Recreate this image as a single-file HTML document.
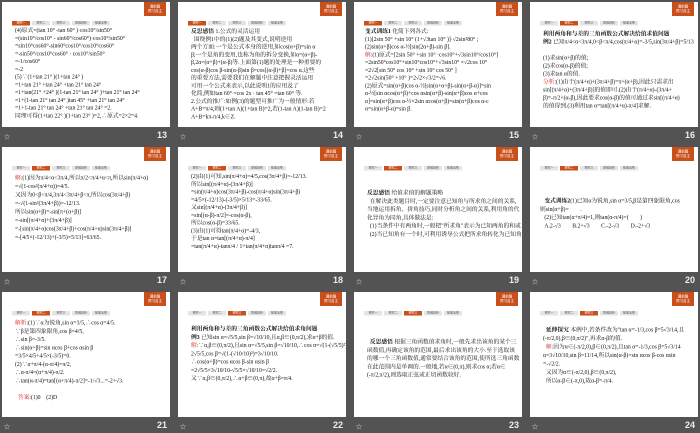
<!DOCTYPE html>
<html><head><meta charset="utf-8"><style>
*{margin:0;padding:0;box-sizing:border-box}
body{width:700px;height:431px;background:#535353;position:relative;overflow:hidden;font-family:"Liberation Serif","Noto Serif CJK SC",serif}
.s{position:absolute;width:168px;height:125px;background:#fff;overflow:hidden}
.in{position:absolute;left:0;top:0;width:336px;height:250px;transform:scale(.5);transform-origin:0 0}
.ob{position:absolute;right:8px;top:0;width:44px;height:28px;background:#c9501c;color:#fff;font-size:7px;line-height:9px;text-align:center;padding-top:5px;font-family:"Liberation Sans","Noto Sans CJK SC",sans-serif}
.tb{position:absolute;left:20px;top:38px;height:9px;display:flex;gap:4px}
.tb span{width:36px;height:9px;background:#e4e4e4;font-size:6px;line-height:9px;text-align:center;color:#555;font-family:"Liberation Sans","Noto Sans CJK SC",sans-serif}
.tb span.a{background:#c9501c;color:#fff}
.tx{position:absolute;left:26px;top:54px;right:14px;font-size:11.5px;line-height:17px;color:#111;white-space:nowrap}
.tx b{font-weight:bold}
.r{color:#d22}
.lab{position:absolute;width:168px;height:14px;color:#ddd;font-size:9px}
.lab i{position:absolute;left:2px;top:3px;font-style:normal;font-size:6px}
.lab b{position:absolute;right:3px;top:1px;font-family:"Liberation Sans",sans-serif;font-size:9px;color:#eee}
</style></head><body>

<div class="s" style="left:2px;top:2px"><div class="in"><div class="ob">课前篇<br>预习自主</div><div class="tb"><span class="a">探究一</span><span>探究二</span><span>探究三</span><span>思维辨析</span><span>随堂演练</span></div>
<div class="tx" style="top:50px;line-height:15.5px">(4)原式=(tan 10° -tan 60° )·cos10°/sin50°<br>=(sin10°/cos10° - sin60°/cos60°)·cos10°/sin50°<br>=sin10°cos60°-sin60°cos10°/cos10°cos60°<br>=-sin50°/cos10°cos60° · cos10°/sin50°<br>=-1/cos60°<br>=-2<br>(5)∵(1+tan 21° )(1+tan 24° )<br>=1+tan 21° +tan 24° +tan 21° tan 24°<br>=1+tan(21° +24° )(1-tan 21° tan 24° )+tan 21° tan 24°<br>=1+(1-tan 21° tan 24° )tan 45° +tan 21° tan 24°<br>=1+1-tan 21° tan 24° +tan 21° tan 24° =2.<br>同理可得(1+tan 22° )(1+tan 23° )=2,∴原式=2×2=4.</div></div></div>
<div class="lab" style="left:2px;top:129px"><i>☆</i><b>13</b></div>

<div class="s" style="left:178px;top:2px"><div class="in"><div class="ob">课前篇<br>预习自主</div><div class="tb"><span class="a">探究一</span><span>探究二</span><span>探究三</span><span>思维辨析</span><span>随堂演练</span></div>
<div class="tx" style="top:52px;line-height:15.5px"><b>反思感悟</b> 1.公式的灵活运用<br>&nbsp;&nbsp;围绕例1中的(1)(2)题及其变式,说明逆用<br>两个方面:一个是公式本身的逆用,如cos(α+β)=sin α<br>β;一个是角的变用,也称为角的拆分变换,如α=(α+β)-<br>β,2α=(α+β)+(α-β)等.上面第(1)题的处理是一种重要的<br>cos(α-β)cos β-sin(α-β)sin β=cos[(α-β)+β]=cos α.这些<br>的重要方法,需要我们在解题中注意把握灵活运用<br>可用一个公式来表示,以此说明1的应用及了<br>化简,例如tan 60° =cos 2x · tan 45° =tan 60° 等.<br>2.公式的推广:如例(3)的题型可推广为一般情形:若<br>A+B=π/4,则(1+tan A)(1+tan B)=2,若(1-tan A)(1-tan B)=2<br>A+B=kπ-π/4,k∈Z.</div></div></div>
<div class="lab" style="left:178px;top:129px"><i>☆</i><b>14</b></div>

<div class="s" style="left:354px;top:2px"><div class="in"><div class="ob">课前篇<br>预习自主</div><div class="tb"><span class="a">探究一</span><span>探究二</span><span>探究三</span><span>思维辨析</span><span>随堂演练</span></div>
<div class="tx" style="top:52px;left:22px;line-height:15.5px"><b>变式训练1</b> 化简下列各式:<br>(1)[2sin 50° +sin 10° (1+√3tan 10° )]·√2sin²80° ;<br>(2)sin(α+β)cos α-½[sin(2α+β)-sin β].<br><span class="r">解</span>:(1)原式=[2sin 50° +sin 10° ·cos10°+√3sin10°/cos10°]<br>=2sin50°cos10°+sin10°cos10°+√3sin10° ×√2cos 10°<br>=2√2[sin 50° cos 10° +sin 10° cos 50° ]<br>=2√2sin(50° +10° )=2√2×√3/2=√6.<br>(2)原式=sin(α+β)cos α-½[sin(α+α+β)-sin(α+β-α)]=sin<br>α-½[sin αcos(α+β)+cos αsin(α+β)-sin(α+β)cos α+cos<br>α]=sin(α+β)cos α-½×2sin αcos(α+β)=sin(α+β)cos α-c<br>α=sin(α+β-α)=sin β.</div></div></div>
<div class="lab" style="left:354px;top:129px"><i>☆</i><b>15</b></div>

<div class="s" style="left:530px;top:2px"><div class="in"><div class="ob">课前篇<br>预习自主</div><div class="tb"><span>探究一</span><span class="a">探究二</span><span>探究三</span><span>思维辨析</span><span>随堂演练</span></div>
<div class="tx" style="top:56px;line-height:16px"><b>利用两角和与差的三角函数公式解决给值求值问题</b><br><b>例2</b> 已知π/4&lt;α&lt;3π/4,0&lt;β&lt;π/4,cos(π/4+α)=-3/5,sin(3π/4+β)=5/13<br><br>(1)求sin(α+β)的值;<br>(2)求cos(α-β)的值;<br>(3)求tan α的值.<br><span class="r">分析</span>:(1)由于(π/4+α)+(3π/4+β)=π+(α+β),因此只需求出<br>sin[(π/4+α)+(3π/4+β)]的值即可.(2)由于(π/4+α)-(3π/4+<br>β)=-π/2+(α-β),因此要求cos(α-β)的值可通过求sin[(π/4+α)<br>的值得到.(3)利用tan α=tan[(π/4+α)-π/4]求解.</div></div></div>
<div class="lab" style="left:530px;top:129px"><i>☆</i><b>16</b></div>

<div class="s" style="left:2px;top:147px"><div class="in"><div class="ob">课前篇<br>预习自主</div><div class="tb"><span>探究一</span><span class="a">探究二</span><span>探究三</span><span>思维辨析</span><span>随堂演练</span></div>
<div class="tx" style="top:54px;line-height:17px"><span class="r">解</span>:(1)因为π/4&lt;α&lt;3π/4,所以π/2&lt;π/4+α&lt;π,所以sin(π/4+α)<br>=√(1-cos²(π/4+α))=4/5.<br>又因为0&lt;β&lt;π/4,3π/4&lt;3π/4+β&lt;π,所以cos(3π/4+β)<br>=-√(1-sin²(3π/4+β))=-12/13.<br>所以sin(α+β)=-sin[π+(α+β)]<br>=-sin[(π/4+α)+(3π/4+β)]<br>=-[sin(π/4+α)cos(3π/4+β)+cos(π/4+α)sin(3π/4+β)]<br>=-[4/5×(-12/13)+(-3/5)×5/13]=63/65.</div></div></div>
<div class="lab" style="left:2px;top:274px"><i>☆</i><b>17</b></div>

<div class="s" style="left:178px;top:147px"><div class="in"><div class="ob">课前篇<br>预习自主</div><div class="tb"><span>探究一</span><span class="a">探究二</span><span>探究三</span><span>思维辨析</span><span>随堂演练</span></div>
<div class="tx" style="top:52px;line-height:15.5px">(2)由(1)可知,sin(π/4+α)=4/5,cos(3π/4+β)=-12/13.<br>所以sin[(π/4+α)-(3π/4+β)]<br>=sin(π/4+α)cos(3π/4+β)-cos(π/4+α)sin(3π/4+β)<br>=4/5×(-12/13)-(-3/5)×5/13=-33/65.<br>又sin[(π/4+α)-(3π/4+β)]<br>=sin[(α-β)-π/2]=-cos(α-β),<br>所以cos(α-β)=33/65.<br>(3)由(1)可得tan(π/4+α)=-4/3,<br>于是tan α=tan[(π/4+α)-π/4]<br>=tan(π/4+α)-tanπ/4 / 1+tan(π/4+α)tanπ/4 =7.</div></div></div>
<div class="lab" style="left:178px;top:274px"><i>☆</i><b>18</b></div>

<div class="s" style="left:354px;top:147px"><div class="in"><div class="ob">课前篇<br>预习自主</div><div class="tb"><span>探究一</span><span class="a">探究二</span><span>探究三</span><span>思维辨析</span><span>随堂演练</span></div>
<div class="tx" style="top:84px;line-height:16.5px"><b>反思感悟</b> 给值求值的解题策略<br>&nbsp;&nbsp;在解决此类题目时,一定要注意已知角与所求角之间的关系,<br>当地运用拆角、拼角技巧,同时分析角之间的关系,利用角的代<br>化异角为同角,具体做法是:<br>&nbsp;&nbsp;(1)当条件中有两角时,一般把"所求角"表示为已知两角的和或<br>&nbsp;&nbsp;(2)当已知角有一个时,可利用诱导公式把所求角转化为已知角</div></div></div>
<div class="lab" style="left:354px;top:274px"><i>☆</i><b>19</b></div>

<div class="s" style="left:530px;top:147px"><div class="in"><div class="ob">课前篇<br>预习自主</div><div class="tb"><span>探究一</span><span class="a">探究二</span><span>探究三</span><span>思维辨析</span><span>随堂演练</span></div>
<div class="tx" style="top:100px;left:20px;line-height:16.5px">&nbsp;&nbsp;&nbsp;<b>变式训练2</b>(1)已知α为锐角,sin α=3/5,β是第四象限角,cos<br>则sin(α+β)=　　.<br>&nbsp;&nbsp;&nbsp;(2)已知tan(α+π/4)=1,则tan(α-π/4)=(　　)<br>&nbsp;&nbsp;&nbsp;A.2-√3　　B.2+√3　　C.-2-√3　　D.-2+√3</div></div></div>
<div class="lab" style="left:530px;top:274px"><i>☆</i><b>20</b></div>

<div class="s" style="left:2px;top:292px"><div class="in"><div class="ob">课前篇<br>预习自主</div><div class="tb"><span>探究一</span><span class="a">探究二</span><span>探究三</span><span>思维辨析</span><span>随堂演练</span></div>
<div class="tx" style="top:54px;line-height:16.5px"><span class="r">解析</span>:(1)∵α为锐角,sin α=3/5,∴cos α=4/5.<br>∵β是第四象限角,cos β=4/5,<br>∴sin β=-3/5.<br>∴sin(α+β)=sin αcos β+cos αsin β<br>=3/5×4/5+4/5×(-3/5)=0.<br>(2)∵α+π/4-(α-π/4)=π/2,<br>∴α-π/4=(α+π/4)-π/2.<br>∴tan(α-π/4)=tan[(α+π/4)-π/2]=-1/√3...=-2+√3.<br><br>&nbsp;&nbsp;<span class="r">答案</span>:(1)0　(2)D</div></div></div>
<div class="lab" style="left:2px;top:419px"><i>☆</i><b>21</b></div>

<div class="s" style="left:178px;top:292px"><div class="in"><div class="ob">课前篇<br>预习自主</div><div class="tb"><span>探究一</span><span>探究二</span><span class="a">探究三</span><span>思维辨析</span><span>随堂演练</span></div>
<div class="tx" style="top:66px;line-height:16.5px"><b>利用两角和与差的三角函数公式解决给值求角问题</b><br><b>例3</b> 已知sin α=√5/5,sin β=√10/10,且α,β∈(0,π/2),求α+β的值.<br><span class="r">解</span>:∵α,β∈(0,π/2),且sin α=√5/5,sin β=√10/10,∴cos α=√(1-(√5/5)²)=<br>2√5/5,cos β=√(1-(√10/10)²)=3√10/10.<br>∴cos(α+β)=cos αcos β-sin αsin β<br>=2√5/5×3√10/10-√5/5×√10/10=√2/2.<br>又∵α,β∈(0,π/2),∴α+β∈(0,π),故α+β=π/4.</div></div></div>
<div class="lab" style="left:178px;top:419px"><i>☆</i><b>22</b></div>

<div class="s" style="left:354px;top:292px"><div class="in"><div class="ob">课前篇<br>预习自主</div><div class="tb"><span>探究一</span><span>探究二</span><span class="a">探究三</span><span>思维辨析</span><span>随堂演练</span></div>
<div class="tx" style="top:92px;line-height:16.5px">&nbsp;&nbsp;<b>反思感悟</b> 根据三角函数值求角时,一般先求出该角的某个三<br>函数值,再确定该角的范围,最后求出该角的大小.至于选取该<br>的哪一个三角函数值,通常要结合该角的范围,使所选三角函数<br>在此范围内是单调的.一般地,若α∈(0,π),则求cos α;若α∈<br>(-π/2,π/2),则选取正弦或正切函数较好.</div></div></div>
<div class="lab" style="left:354px;top:419px"><i>☆</i><b>23</b></div>

<div class="s" style="left:530px;top:292px"><div class="in"><div class="ob">课前篇<br>预习自主</div><div class="tb"><span>探究一</span><span>探究二</span><span class="a">探究三</span><span>思维辨析</span><span>随堂演练</span></div>
<div class="tx" style="top:68px;line-height:17px">&nbsp;&nbsp;<b>延伸探究</b> 本例中,若条件改为"tan α=-1/3,cos β=5√3/14,且<br>(-π/2,0),β∈(0,π/2)",再求α-β的值.<br>&nbsp;&nbsp;<span class="r">解</span>:因为α∈(-π/2,0),β∈(0,π/2),且tan α=-1/3,cos β=5√3/14<br>α=3√10/10,sin β=11/14,所以sin(α-β)=sin αcos β-cos αsin<br>=-√2/2.<br>&nbsp;&nbsp;又因为α∈(-π/2,0),β∈(0,π/2),<br>&nbsp;&nbsp;所以α-β∈(-π,0),故α-β=-π/4.</div></div></div>
<div class="lab" style="left:530px;top:419px"><i>☆</i><b>24</b></div>
</body></html>
